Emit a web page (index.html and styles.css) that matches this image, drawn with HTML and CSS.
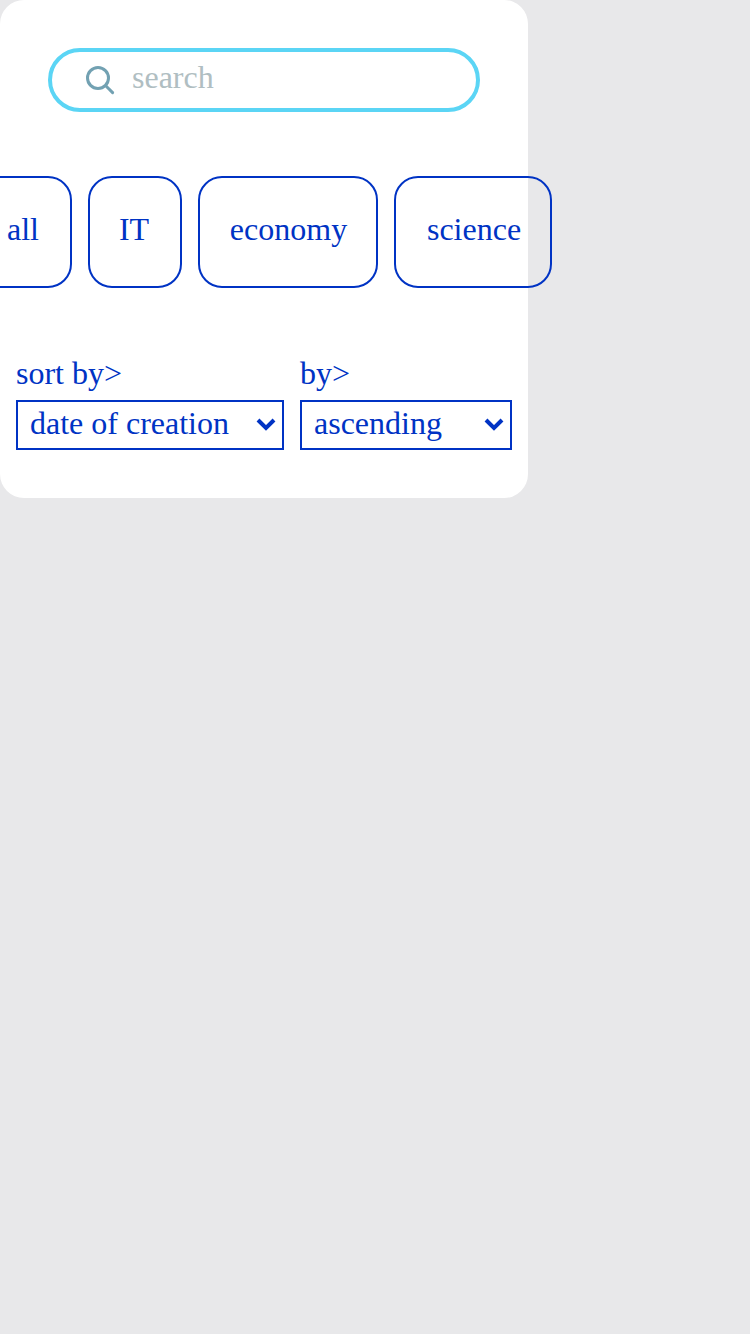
FILE: index.html
```html
<!DOCTYPE html>
<html lang="en">
<head>
<meta charset="utf-8">
<title>Search</title>
<link rel="stylesheet" href="styles.css">
</head>
<body>
<main class="panel">
  <div class="search">
    <svg class="search-icon" viewBox="0 0 32 32"><circle cx="14" cy="14" r="10.5"/><path d="M22 22l6.6 6.6"/></svg>
    <span class="placeholder">search</span>
  </div>
  <nav class="tags">
    <button class="tag tag-all">all</button>
    <button class="tag tag-it">IT</button>
    <button class="tag tag-economy">economy</button>
    <button class="tag tag-science">science</button>
  </nav>
  <div class="sorting">
    <div class="field field-key">
      <span class="label">sort by&gt;</span>
      <div class="select"><span class="value">date of creation</span><svg class="chevron" viewBox="0 0 20 14"><path d="M2 2l8 8 8-8"/></svg></div>
    </div>
    <div class="field field-order">
      <span class="label">by&gt;</span>
      <div class="select"><span class="value">ascending</span><svg class="chevron" viewBox="0 0 20 14"><path d="M2 2l8 8 8-8"/></svg></div>
    </div>
  </div>
</main>
</body>
</html>
```
FILE: styles.css
```css
* { box-sizing: border-box; }
body {
  margin: 0;
  background: #e8e8ea;
  color: #0033c4;
  font: 32px/36px "Liberation Serif", serif;
  overflow-x: hidden;
}
.panel {
  width: 528px;
  height: 498px;
  padding-top: 48px;
  border-radius: 24px;
  background: #fff;
}
.search {
  display: flex;
  align-items: center;
  width: 432px;
  height: 64px;
  margin: 0 48px;
  padding-left: 32px;
  border: 4px solid #5bd5f5;
  border-radius: 32px;
}
.search-icon {
  width: 32px;
  height: 32px;
  margin-right: 16px;
  fill: none;
  stroke: #72a1b2;
  stroke-width: 3;
  stroke-linecap: round;
}
.placeholder { color: #b0bec2; padding-bottom: 6px; }
.tags {
  display: flex;
  justify-content: center;
  gap: 16px;
  margin-top: 64px;
}
.tag {
  flex: none;
  height: 112px;
  padding: 0 0 6px;
  border: 2px solid #0033c4;
  border-radius: 24px;
  background: none;
  color: inherit;
  font: inherit;
}
.tag-all { width: 96px; padding-right: 2px; }
.tag-it { width: 94px; padding-right: 2px; }
.tag-economy { width: 180px; padding-left: 1px; }
.tag-science { width: 158px; padding-left: 2px; }
.sorting {
  display: flex;
  gap: 16px;
  padding: 0 16px;
  margin-top: 67px;
}
.field-key { width: 268px; }
.field-order { width: 212px; }
.label { display: block; height: 45px; }
.select {
  display: flex;
  align-items: center;
  justify-content: space-between;
  height: 50px;
  padding: 0 6px 0 12px;
  border: 2px solid #0033c4;
}
.value { padding-bottom: 4px; }
.chevron {
  width: 20px;
  height: 14px;
  fill: none;
  stroke: #0033c4;
  stroke-width: 4;
}
```
